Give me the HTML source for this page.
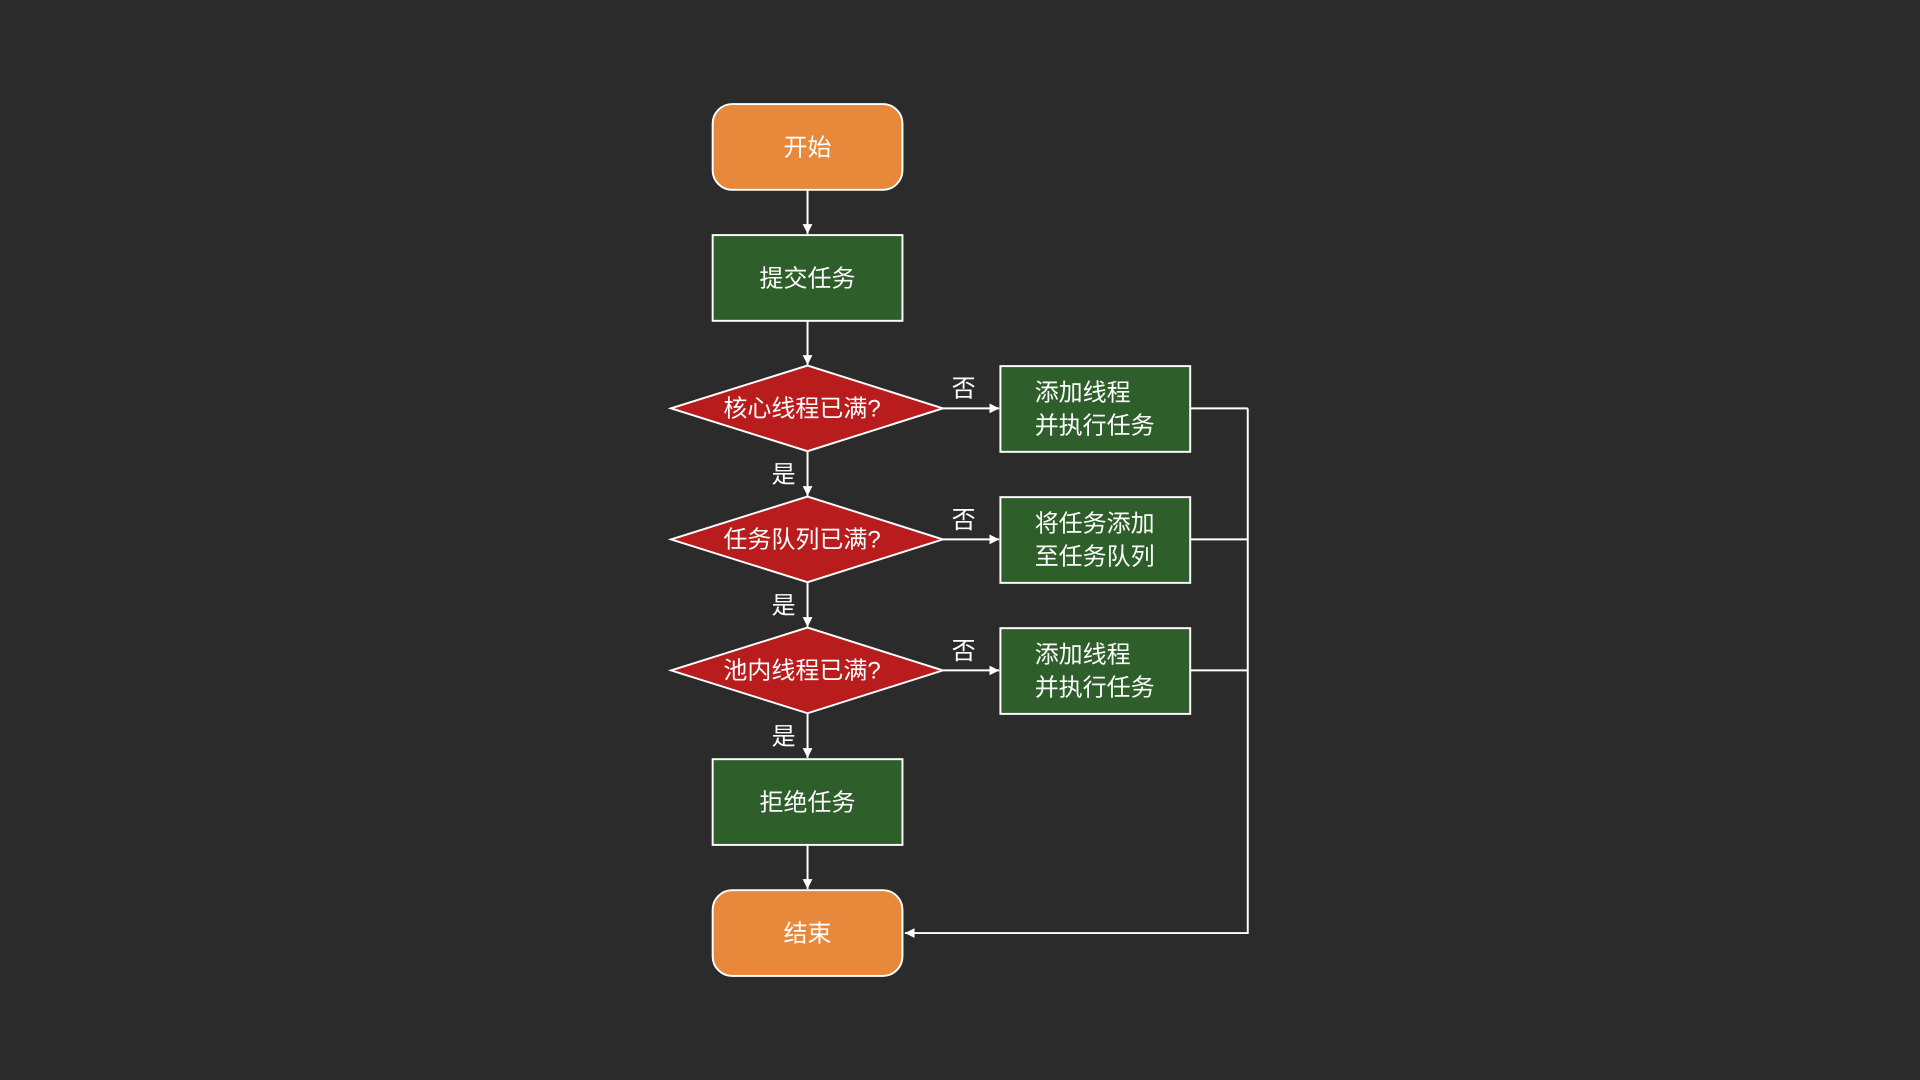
<!DOCTYPE html>
<html><head><meta charset="utf-8"><style>
html,body{margin:0;padding:0;background:#2b2b2b;}
svg{display:block}
text{font-family:"Liberation Sans","Noto Sans CJK SC",sans-serif;fill:#fff;font-size:19.6px;}
</style></head><body>
<svg width="1920" height="1080" viewBox="0 0 1568 882" xmlns="http://www.w3.org/2000/svg">
<defs><marker id="a" viewBox="0 0 10 10" refX="10" refY="5" markerWidth="5" markerHeight="5" orient="auto"><path d="M0,0L10,5L0,10z" fill="#fff"/></marker></defs>
<rect x="0" y="0" width="1568" height="882" fill="#2b2b2b"/>
<g stroke="#fff" stroke-width="1.6" fill="none">
<line x1="659.5" y1="155" x2="659.5" y2="191" marker-end="url(#a)"/>
<line x1="659.5" y1="262" x2="659.5" y2="298" marker-end="url(#a)"/>
<line x1="659.5" y1="369" x2="659.5" y2="405" marker-end="url(#a)"/>
<line x1="659.5" y1="476" x2="659.5" y2="512" marker-end="url(#a)"/>
<line x1="659.5" y1="583" x2="659.5" y2="619" marker-end="url(#a)"/>
<line x1="659.5" y1="690" x2="659.5" y2="726" marker-end="url(#a)"/>
<line x1="770" y1="333.5" x2="816" y2="333.5" marker-end="url(#a)"/>
<line x1="770" y1="440.5" x2="816" y2="440.5" marker-end="url(#a)"/>
<line x1="770" y1="547.5" x2="816" y2="547.5" marker-end="url(#a)"/>
<line x1="972" y1="333.5" x2="1019" y2="333.5"/>
<line x1="972" y1="440.5" x2="1019" y2="440.5"/>
<line x1="972" y1="547.5" x2="1019" y2="547.5"/>
<polyline points="1019,333.5 1019,762 739,762" marker-end="url(#a)"/>
</g>
<g stroke="#fff" stroke-width="1.6">
<rect x="582" y="85" width="155" height="70" rx="16" fill="#e8883a"/>
<rect x="582" y="192" width="155" height="70" fill="#2e5e2a"/>
<polygon points="548,333.5 659.5,298.5 770,333.5 659.5,368.5" fill="#b81c1c"/>
<polygon points="548,440.5 659.5,405.5 770,440.5 659.5,475.5" fill="#b81c1c"/>
<polygon points="548,547.5 659.5,512.5 770,547.5 659.5,582.5" fill="#b81c1c"/>
<rect x="817" y="299" width="155" height="70" fill="#2e5e2a"/>
<rect x="817" y="406" width="155" height="70" fill="#2e5e2a"/>
<rect x="817" y="513" width="155" height="70" fill="#2e5e2a"/>
<rect x="582" y="620" width="155" height="70" fill="#2e5e2a"/>
<rect x="582" y="727" width="155" height="70" rx="16" fill="#e8883a"/>
</g>
<g text-anchor="middle">
<text x="659.5" y="127">开始</text>
<text x="659.5" y="234">提交任务</text>
<text x="655" y="340">核心线程已满?</text>
<text x="655" y="447">任务队列已满?</text>
<text x="655" y="554">池内线程已满?</text>
<text x="659.5" y="662">拒绝任务</text>
<text x="659.5" y="769">结束</text>
<text x="787" y="324">否</text>
<text x="787" y="431">否</text>
<text x="787" y="538">否</text>
<text x="640" y="394">是</text>
<text x="640" y="501">是</text>
<text x="640" y="608">是</text>
</g>
<g>
<text x="845" y="327">添加线程</text>
<text x="845" y="354">并执行任务</text>
<text x="845" y="434">将任务添加</text>
<text x="845" y="461">至任务队列</text>
<text x="845" y="541">添加线程</text>
<text x="845" y="568">并执行任务</text>
</g>
</svg>
</body></html>
